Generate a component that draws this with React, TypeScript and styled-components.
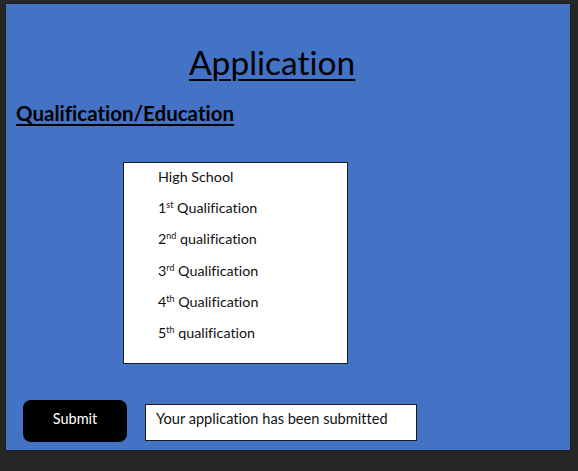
import React from 'react'
import styled, { createGlobalStyle } from 'styled-components'

const GlobalStyle = createGlobalStyle`
  html, body {
    margin: 0;
    padding: 0;
    background: #262626;
  }
  body {
    font-family: Lato, 'Open Sans', sans-serif;
    font-variant-ligatures: none;
  }
`

const Screen = styled.div`
  width: 578px;
  height: 471px;
  padding: 3px 0 0 5px;
  box-sizing: border-box;
`

const Slide = styled.div`
  width: 566px;
  height: 448px;
  box-sizing: border-box;
  background: #4472c4;
  border: 1px solid #1a1f2a;
  display: flex;
  flex-direction: column;
`

const Title = styled.h1`
  margin: 38px 0 0 183px;
  font-size: 33.5px;
  font-weight: 400;
  line-height: 40px;
  color: #000;
  text-decoration: underline;
  text-decoration-thickness: 2px;
  text-underline-offset: 4px;
`

const Heading = styled.h2`
  margin: 18px 0 0 10px;
  font-size: 20.5px;
  font-weight: 700;
  line-height: 26px;
  color: #000;
  text-decoration: underline;
  text-decoration-thickness: 2px;
  text-underline-offset: 3px;
`

const ListBox = styled.ul`
  margin: 36px 0 0 117px;
  padding: 4px 0 0 34px;
  width: 225px;
  height: 202px;
  box-sizing: border-box;
  list-style: none;
  background: #fff;
  border: 1px solid #1c1c1c;
  display: flex;
  flex-direction: column;
  gap: 11.2px;
`

const ListItem = styled.li`
  font-size: 14.3px;
  line-height: 20px;
  color: #111;

  sup {
    font-size: 9px;
    line-height: 0;
    vertical-align: 5px;
  }
`

const Footer = styled.div`
  margin: 36px 0 0 17px;
  display: flex;
  align-items: flex-start;
  gap: 18px;
`

const SubmitButton = styled.button`
  width: 104px;
  height: 42px;
  border: none;
  border-radius: 8px;
  background: #000;
  color: #fff;
  font-family: inherit;
  font-size: 14.5px;
  padding: 0 0 5px;
  cursor: pointer;
`

const Message = styled.div`
  margin-top: 4px;
  width: 272px;
  height: 37px;
  box-sizing: border-box;
  background: #fff;
  border: 1px solid #1c1c1c;
  padding: 4px 0 0 10px;
  font-size: 14.6px;
  line-height: 20px;
  color: #111;
`

const qualifications: { num?: string; sup?: string; label: string }[] = [
  { label: 'High School' },
  { num: '1', sup: 'st', label: 'Qualification' },
  { num: '2', sup: 'nd', label: 'qualification' },
  { num: '3', sup: 'rd', label: 'Qualification' },
  { num: '4', sup: 'th', label: 'Qualification' },
  { num: '5', sup: 'th', label: 'qualification' },
]

const App = () => {
  return (
    <>
      <GlobalStyle />
      <Screen>
        <Slide>
          <Title>Application</Title>
          <Heading>Qualification/Education</Heading>
          <ListBox>
            {qualifications.map((q) => (
              <ListItem key={q.label + (q.num || '')}>
                {q.num}
                {q.sup && <sup>{q.sup}</sup>}
                {q.num ? ' ' : ''}
                {q.label}
              </ListItem>
            ))}
          </ListBox>
          <Footer>
            <SubmitButton>Submit</SubmitButton>
            <Message>Your application has been submitted</Message>
          </Footer>
        </Slide>
      </Screen>
    </>
  )
}

export default App
